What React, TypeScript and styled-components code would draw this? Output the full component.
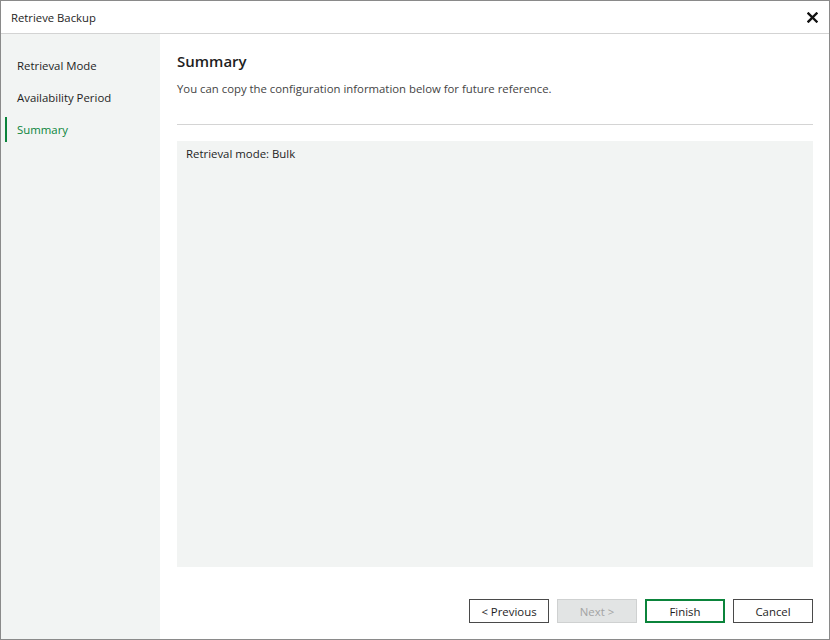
import React from 'react';
import styled, { createGlobalStyle, css } from 'styled-components';

const GlobalStyle = createGlobalStyle`
    html, body {
        margin: 0;
        padding: 0;
        background: #ffffff;
    }
    body {
        font-family: "Open Sans", "Noto Sans", "Liberation Sans", sans-serif;
        color: #1e1e1e;
    }
`;

const Window = styled.div`
    width: 830px;
    height: 640px;
    box-sizing: border-box;
    border: 1px solid #8a8a8a;
    display: flex;
    flex-direction: column;
    background: #fff;
`;

const TitleBar = styled.div`
    height: 32px;
    flex: none;
    display: flex;
    align-items: center;
    justify-content: space-between;
    padding: 0 10px 0 10px;
    border-bottom: 1px solid #d3d3d3;
    font-size: 11.3px;
`;

const CloseButton = styled.button`
    border: none;
    background: none;
    padding: 0;
    width: 14px;
    height: 14px;
    display: flex;
    align-items: center;
    justify-content: center;
    cursor: pointer;
`;

const Body = styled.div`
    flex: 1;
    display: flex;
    min-height: 0;
`;

const Sidebar = styled.nav`
    width: 159px;
    flex: none;
    background: #f2f4f3;
    padding-top: 19px;
    display: flex;
    flex-direction: column;
    gap: 8px;
`;

const NavItem = styled.div<{ active?: boolean }>`
    position: relative;
    height: 24px;
    display: flex;
    align-items: center;
    padding-left: 16px;
    font-size: 11.4px;
    color: #1e1e1e;
    ${({ active }) => active && css`
        color: #0b843b;
        &::before {
            content: '';
            position: absolute;
            left: 4px;
            top: 0;
            bottom: -1px;
            width: 2px;
            background: #0b843b;
        }
    `}
`;

const Main = styled.main`
    flex: 1;
    display: flex;
    flex-direction: column;
    padding: 16px 16px 16px 17px;
    min-width: 0;
`;

const Heading = styled.h1`
    margin: 0;
    font-size: 15px;
    font-weight: 600;
    line-height: 22px;
    color: #1e1e1e;
`;

const Subtitle = styled.p`
    margin: 9px 0 0 0;
    font-size: 11.35px;
    line-height: 16px;
    color: #444;
`;

const Divider = styled.hr`
    margin: 27px 0 16px 0;
    border: none;
    border-top: 1px solid #d4d4d4;
    height: 0;
`;

const SummaryBox = styled.div`
    height: 426px;
    background: #f2f4f3;
    padding: 5px 9px;
    box-sizing: border-box;
    font-size: 11.4px;
    line-height: 16px;
    color: #1e1e1e;
`;

const Footer = styled.div`
    margin-top: auto;
    display: flex;
    justify-content: flex-end;
    gap: 8px;
`;

const Button = styled.button<{ variant?: 'primary' | 'disabled' }>`
    width: 80px;
    height: 24px;
    box-sizing: border-box;
    background: #fff;
    border: 1px solid #4a4a4a;
    font-family: inherit;
    font-size: 11.4px;
    color: #1e1e1e;
    padding: 0;
    ${({ variant }) => variant === 'primary' && css`
        border: 2px solid #0b843b;
    `}
    ${({ variant }) => variant === 'disabled' && css`
        background: #e2e4e4;
        border-color: #cfd1d1;
        color: #a3a3a3;
    `}
`;

const steps = ['Retrieval Mode', 'Availability Period', 'Summary'];

const App = () => {
    return <>
        <GlobalStyle />
        <Window>
            <TitleBar>
                <span>Retrieve Backup</span>
                <CloseButton aria-label="Close">
                    <svg width="11" height="11" viewBox="0 0 11 11">
                        <path d="M1.5 1.5 L9.5 9.5 M9.5 1.5 L1.5 9.5" stroke="#111" strokeWidth="2.4" strokeLinecap="square" />
                    </svg>
                </CloseButton>
            </TitleBar>
            <Body>
                <Sidebar>
                    {steps.map((s) => <NavItem key={s} active={s === 'Summary'}>{s}</NavItem>)}
                </Sidebar>
                <Main>
                    <Heading>Summary</Heading>
                    <Subtitle>You can copy the configuration information below for future reference.</Subtitle>
                    <Divider />
                    <SummaryBox>Retrieval mode: Bulk</SummaryBox>
                    <Footer>
                        <Button>&lt; Previous</Button>
                        <Button variant="disabled" disabled>Next &gt;</Button>
                        <Button variant="primary">Finish</Button>
                        <Button>Cancel</Button>
                    </Footer>
                </Main>
            </Body>
        </Window>
    </>
}

export default App;
